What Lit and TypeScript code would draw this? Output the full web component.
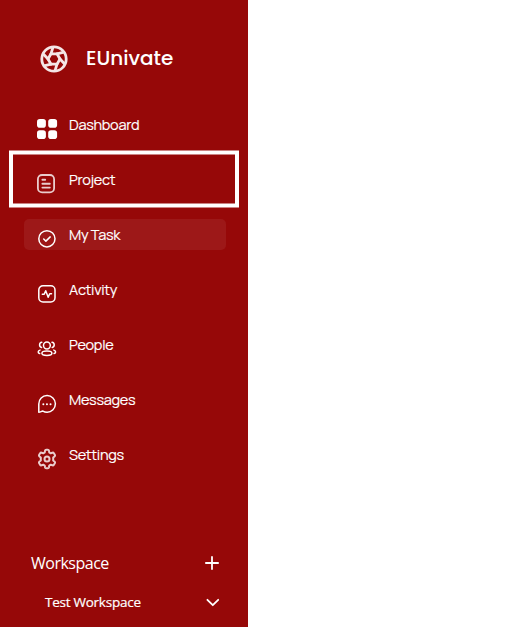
import { LitElement, html, css, svg } from "lit";
import { customElement } from "lit/decorators.js";
import { classMap } from "lit/directives/class-map.js";

const icons = {
  dashboard: svg`<g fill="currentColor" stroke="none">
    <rect x="0" y="0" width="8.9" height="8.7" rx="2.8"/><rect x="11.2" y="0" width="8.9" height="8.7" rx="2.8"/>
    <rect x="0" y="11.3" width="8.9" height="8.7" rx="2.8"/><rect x="11.2" y="11.3" width="8.9" height="8.7" rx="2.8"/></g>`,
  project: svg`<g opacity=".8"><rect x=".9" y="1" width="16.2" height="17.4" rx="4.2" stroke-width="1.8"/>
    <path d="M5.4 5.7h2.8M5.4 9.7h7.4M5.4 13.6h7.4" stroke-width="1.9"/></g>`,
  task: svg`<circle cx="9.9" cy="9.8" r="8.1"/><path d="M6.7 10l2.2 2.1 4.3-4.2"/>`,
  activity: svg`<rect x="1.8" y="1.7" width="16.2" height="16.2" rx="4.2"/>
    <path d="M5.3 10.2h1.9l1.5-3.5 2.5 6.5 1.5-3.4h1.8"/>`,
  people: svg`<g stroke-width="1.5"><circle cx="9.9" cy="6.5" r="3.4"/><ellipse cx="9.9" cy="14.3" rx="5" ry="2.2"/>
    <path d="M4.8 3.3a2.6 2.6 0 0 0-.2 5.1M15 3.3a2.6 2.6 0 0 1 .2 5.1M3 11.1c-1.2.4-1.8 1-1.8 1.8s.5 1.3 1.5 1.6M16.8 11.1c1.2.4 1.8 1 1.8 1.8s-.5 1.3-1.5 1.6"/></g>`,
  messages: svg`<path d="M1.8 18.2V10a8.3 8.3 0 1 1 8.3 8.2 8.5 8.5 0 0 1-4.2-1.1c-1.5.1-2.4 1.1-4.1 1.1z"/>
    <path d="M6.3 10.2h.1M9.9 10.2h.1M13.5 10.2h.1" stroke-width="1.9"/>`,
  settings: svg`<g opacity=".8" stroke-width="2"><circle cx="10" cy="10" r="2.5"/>
    <path d="M8 1.8Q8.2.8 9.2.8h1.6q1 0 1.2 1l.3 1.7 1.4.8 1.7-.6q1-.3 1.5.6l.9 1.5q.5.9-.3 1.6l-1.3 1.1v3l1.3 1.1q.8.7.3 1.6l-.9 1.5q-.5.9-1.5.6l-1.7-.6-1.4.8-.3 1.7q-.2 1-1.2 1H9.2q-1 0-1.2-1l-.3-1.7-1.4-.8-1.7.6q-1 .3-1.5-.6l-.9-1.5q-.5-.9.3-1.6l1.3-1.1v-3L2.5 7.4q-.8-.7-.3-1.6l.9-1.5q.5-.9 1.5-.6l1.7.6 1.4-.8z"/></g>`,
};

const entries = [
  { label: "Dashboard", icon: icons.dashboard },
  { label: "Project", icon: icons.project, outlined: true },
  { label: "My Task", icon: icons.task, hovered: true },
  { label: "Activity", icon: icons.activity },
  { label: "People", icon: icons.people },
  { label: "Messages", icon: icons.messages },
  { label: "Settings", icon: icons.settings },
];

@customElement("app-root")
export class AppRoot extends LitElement {
  static styles = css`
    :host { display: block; height: 100vh; background: #fff; overflow: hidden; }
    * { box-sizing: border-box; }
    svg { display: block; overflow: visible; fill: none; stroke: currentColor; stroke-width: 1.5; stroke-linecap: round; stroke-linejoin: round; }
    .sidebar { width: 248px; height: 100%; min-height: 627px; background: #960808; color: #fff; display: flex; flex-direction: column; }
    .brand { flex: none; height: 109px; padding: 44px 0 0 40px; display: flex; align-items: flex-start; gap: 18px; }
    .logo { width: 28px; height: 30px; opacity: .9; }
    .name { font: 500 20px/28px Poppins, Inter, sans-serif; }
    nav { flex: none; display: flex; flex-direction: column; gap: 24px; padding: 0 22px 0 24px; }
    .item { position: relative; height: 31px; padding-left: 13px; display: flex; gap: 12px; border-radius: 5px;
      font: 450 14.5px/32px Manrope, Inter, sans-serif; letter-spacing: -.3px; -webkit-text-stroke: .15px currentColor; }
    .item svg { width: 20px; height: 20px; margin-top: 10px; }
    .hovered { background: #9d1818; }
    .outlined::after { content: ""; position: absolute; inset: -14px -13px -12px -15px; border: 4px solid #fff; transform: translateY(.5px); }
    .workspace { flex: none; margin-top: 71px; padding: 0 29px 0 31px; font-family: "Segoe UI", "Open Sans", sans-serif; font-weight: 450; }
    .line { display: flex; align-items: center; justify-content: space-between; }
    .heading { height: 44px; font-size: 16px; letter-spacing: -.5px; }
    .child { height: 34px; padding-left: 14px; font-size: 13.5px; letter-spacing: -.25px; -webkit-text-stroke: .2px currentColor; }
    .line svg { width: 14px; height: 14px; stroke-width: 1.8; }
  `;

  render() {
    return html`<aside class="sidebar">
      <header class="brand">
        <svg class="logo" viewBox="0 0 28 28">
          <circle cx="14" cy="14" r="12.2" stroke-width="2.8"/>
          <g stroke-width="2.8">${[0, 60, 120, 180, 240, 300].map(
            (a) => svg`<path transform="rotate(${a} 14 14)" d="M11 8.8h6L23 7.4"/>`
          )}</g>
        </svg>
        <span class="name">EUnivate</span>
      </header>
      <nav>
        ${entries.map((e) => html`<div class=${classMap({ item: true, hovered: !!e.hovered, outlined: !!e.outlined })}>
          <svg viewBox="0 0 20 20">${e.icon}</svg><span>${e.label}</span>
        </div>`)}
      </nav>
      <section class="workspace">
        <div class="line heading"><span>Workspace</span><svg viewBox="0 0 14 14"><path d="M7 .9v12.2M.9 7h12.2"/></svg></div>
        <div class="line child"><span>Test Workspace</span><svg viewBox="0 0 14 14"><path d="M2.4 4.8l5.4 5.4 5.4-5.4"/></svg></div>
      </section>
    </aside>`;
  }
}
